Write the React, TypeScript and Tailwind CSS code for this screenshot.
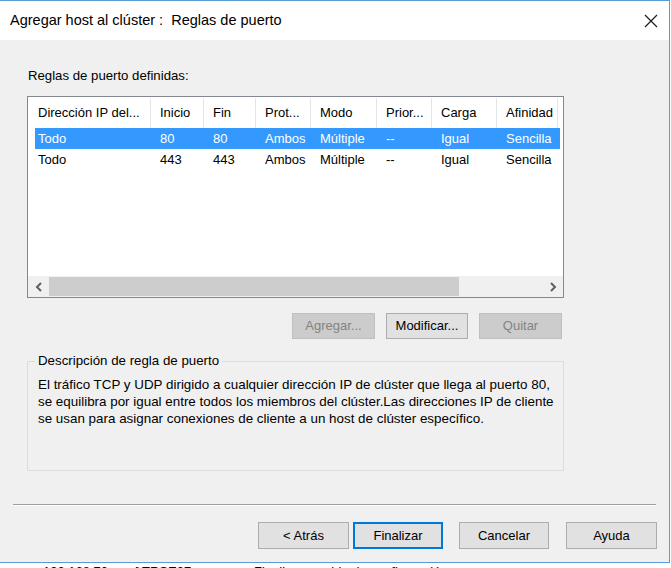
import React from 'react';

const font = { fontFamily: '"Liberation Sans", Arial, sans-serif' };

type Col = { label: string; width: number };

const columns: Col[] = [
  { label: 'Dirección IP del...', width: 123 },
  { label: 'Inicio', width: 53 },
  { label: 'Fin', width: 52 },
  { label: 'Prot...', width: 55 },
  { label: 'Modo', width: 66 },
  { label: 'Prior...', width: 55 },
  { label: 'Carga', width: 65 },
  { label: 'Afinidad', width: 61 },
];

const rows = [
  ['Todo', '80', '80', 'Ambos', 'Múltiple', '--', 'Igual', 'Sencilla'],
  ['Todo', '443', '443', 'Ambos', 'Múltiple', '--', 'Igual', 'Sencilla'],
];

const Button: React.FC<{ label: string; disabled?: boolean; focused?: boolean; className?: string }> = ({
  label,
  disabled,
  focused,
  className = '',
}) => {
  let look = 'bg-[#e1e1e1] border border-[#adadad] text-black';
  if (disabled) look = 'bg-[#cccccc] border border-[#bfbfbf] text-[#838383]';
  if (focused) look = 'bg-[#e1e1e1] border-2 border-[#0078d7] text-black';
  return (
    <div className={`flex items-center justify-center text-[13px] ${look} ${className}`}>
      {label}
    </div>
  );
};

const PortList: React.FC = () => (
  <div className="ml-[27px] w-[537px] h-[202px] border border-[#828790] bg-white flex flex-col">
    <div className="flex h-[31px] pt-[1px]">
      {columns.map((c, i) => (
        <div
          key={c.label}
          style={{ width: c.width }}
          className={`flex items-center border-r border-[#e5e5e5] text-[13px] text-black ${i === 0 ? 'pl-[10px]' : 'pl-[9px]'}`}
        >
          {c.label}
        </div>
      ))}
    </div>
    <div className="flex-1">
      {rows.map((r, ri) => (
        <div
          key={ri}
          className={`ml-[7px] w-[525px] h-[21px] flex items-center text-[13px] ${
            ri === 0 ? 'bg-[#3399ff] text-white border border-dotted border-[#c77a2a]' : 'text-black border border-transparent'
          }`}
        >
          {r.map((cell, ci) => (
            <div
              key={ci}
              style={{ width: ci === 0 ? 115 : columns[ci].width }}
              className={`truncate ${ci === 0 ? 'pl-[2px]' : 'pl-[9px]'}`}
            >
              {cell}
            </div>
          ))}
        </div>
      ))}
    </div>
    <div className="h-[21px] bg-[#f0f0f0] flex items-center">
      <div className="w-[21px] h-full flex items-center justify-center">
        <svg width="8" height="10" viewBox="0 0 8 10">
          <path d="M6 1 L2 5 L6 9" fill="none" stroke="#606060" strokeWidth="2" />
        </svg>
      </div>
      <div className="w-[410px] h-[19px] bg-[#cdcdcd]" />
      <div className="flex-1" />
      <div className="w-[21px] h-full flex items-center justify-center">
        <svg width="8" height="10" viewBox="0 0 8 10">
          <path d="M2 1 L6 5 L2 9" fill="none" stroke="#606060" strokeWidth="2" />
        </svg>
      </div>
    </div>
  </div>
);

export default function App() {
  return (
    <div style={font} className="w-[671px] h-[568px] bg-white overflow-hidden flex flex-col">
      <div className="w-[670px] h-[563px] shrink-0 border-t border-r border-b border-[#5b9bd5] flex flex-col">
        <div className="h-[39px] bg-white flex items-center justify-between pl-[10px] pr-[11px]">
          <span className="text-[14.5px] text-black">Agregar host al clúster :&nbsp; Reglas de puerto</span>
          <svg width="14" height="14" viewBox="0 0 14 14">
            <path d="M1 1 L13 13 M13 1 L1 13" stroke="#1a1a1a" strokeWidth="1.2" />
          </svg>
        </div>
        <div className="flex-1 bg-[#f0f0f0] flex flex-col">
          <div className="ml-[28px] mt-[28px] h-[16px] flex items-center text-[13.2px] text-black">
            Reglas de puerto definidas:
          </div>
          <div className="mt-[12px]">
            <PortList />
          </div>
          <div className="mt-[15px] flex justify-end gap-[11px] pr-[107px]">
            <Button label="Agregar..." disabled className="w-[83px] h-[26px]" />
            <Button label="Modificar..." className="w-[82px] h-[26px]" />
            <Button label="Quitar" disabled className="w-[83px] h-[26px]" />
          </div>
          <div className="relative ml-[27px] mt-[22px] w-[537px] h-[110px] border border-[#dcdcdc]">
            <div className="absolute -top-[9px] left-[7px] px-[3px] bg-[#f0f0f0] text-[13.3px] leading-[16px] text-black">
              Descripción de regla de puerto
            </div>
            <p className="pl-[10px] pt-[14px] pr-[4px] text-[13.4px] leading-[17px] text-black">
              El tráfico TCP y UDP dirigido a cualquier dirección IP de clúster que llega al puerto 80,
              <br />
              se equilibra por igual entre todos los miembros del clúster.Las direcciones IP de cliente
              <br />
              se usan para asignar conexiones de cliente a un host de clúster específico.
            </p>
          </div>
          <div className="mx-[13px] mt-[33px] h-[2px] border-t border-[#a0a0a0] border-b border-b-white" />
          <div className="mt-[16px] flex pl-[258px]">
            <Button label="< Atrás" className="w-[91px] h-[27px]" />
            <Button label="Finalizar" focused className="ml-[4px] w-[90px] h-[27px]" />
            <Button label="Cancelar" className="ml-[16px] w-[90px] h-[27px]" />
            <Button label="Ayuda" className="ml-[17px] w-[91px] h-[27px]" />
          </div>
        </div>
      </div>
      <div className="h-[5px] overflow-hidden flex text-[13px] leading-[16px] text-black">
        <div className="mt-[1px] flex">
          <span className="ml-[43px] w-[92px]">192.168.70</span>
          <span className="w-[119px]">[ TRSE07</span>
          <span>Finalizar cambio de configuración</span>
        </div>
      </div>
    </div>
  );
}
